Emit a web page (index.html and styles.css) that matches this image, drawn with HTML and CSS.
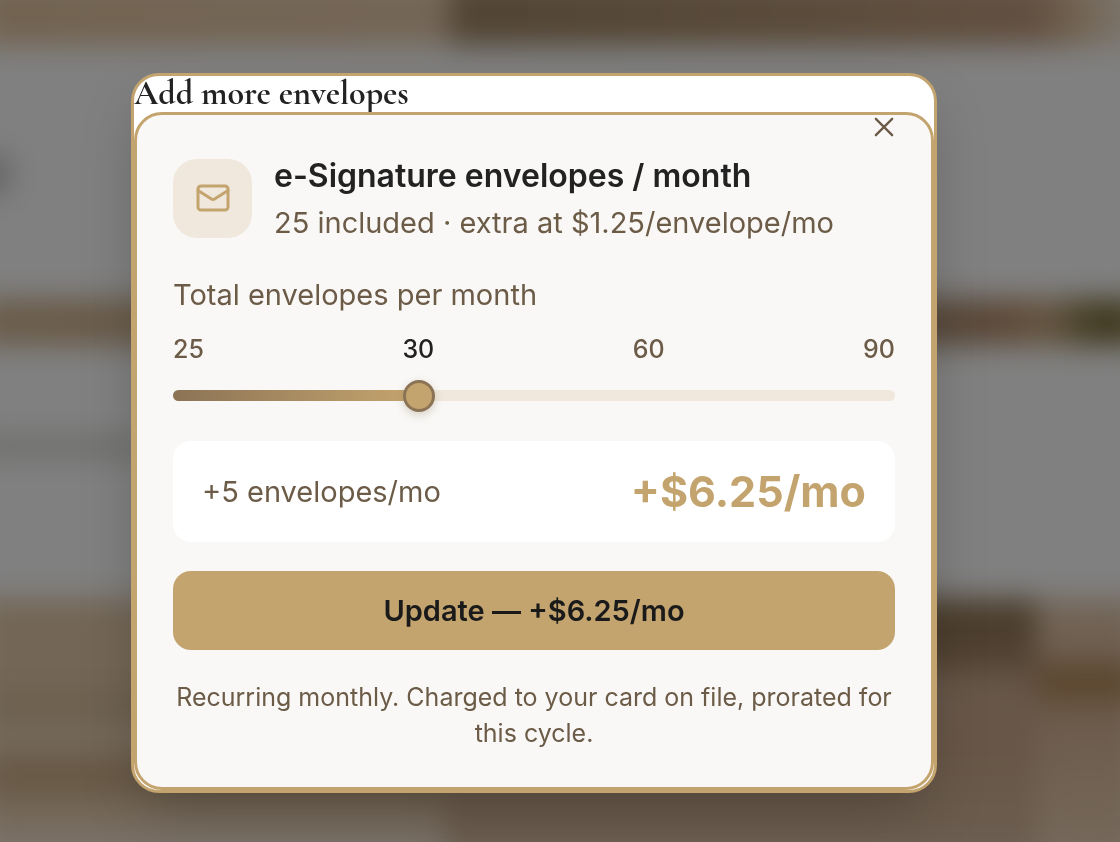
FILE: index.html
```
<!DOCTYPE html>
<html lang="en">
<head>
    <meta charset="UTF-8">
    <meta name="viewport" content="width=device-width, initial-scale=1.0">
    <title>Add more envelopes</title>
    <link rel="stylesheet" href="styles.css">
</head>
<body>
    <!-- Blurred page behind the dialog -->
    <div class="backdrop" aria-hidden="true">
        <div class="band-top"></div>
        <div class="gap-top"></div>
        <div class="band-middle"></div>
        <div class="gap-bottom"></div>
        <div class="band-bottom">
            <div class="photo-left"></div>
            <div class="photo-center"></div>
            <div class="photo-right"></div>
        </div>
    </div>

    <main class="overlay">
        <section class="dialog" role="dialog" aria-labelledby="dialog-title">
            <h1 id="dialog-title">Add more envelopes</h1>
            <form class="card">
                <button type="button" class="close" aria-label="Close">
                    <svg viewBox="0 0 24 24" width="28" height="28"><path d="M5 5l14 14M19 5L5 19"/></svg>
                </button>

                <div class="item">
                    <div class="item-icon">
                        <svg viewBox="0 0 24 24" width="36" height="36">
                            <rect x="2" y="4" width="20" height="16" rx="2"/>
                            <path d="M2 7l8.97 5.7a1.94 1.94 0 0 0 2.06 0L22 7"/>
                        </svg>
                    </div>
                    <div>
                        <h2>e-Signature envelopes / month</h2>
                        <p>25 included · extra at $1.25/envelope/mo</p>
                    </div>
                </div>

                <label class="slider-label" for="envelopes">Total envelopes per month</label>
                <div class="stops">
                    <span>25</span>
                    <span class="active">30</span>
                    <span>60</span>
                    <span>90</span>
                </div>
                <input type="range" class="slider" id="envelopes" min="0" max="3" step="1" value="1">

                <div class="summary">
                    <span>+5 envelopes/mo</span>
                    <strong>+$6.25/mo</strong>
                </div>

                <button type="button" class="update">Update — +$6.25/mo</button>
                <p class="note">Recurring monthly. Charged to your card on file, prorated for this cycle.</p>
            </form>
        </section>
    </main>
</body>
</html>
```
FILE: styles.css
```
* {
    box-sizing: border-box;
}
body {
    margin: 0;
    font-family: Inter, "Liberation Sans", sans-serif;
    color: #222;
    background-color: #808080;
}
h1, h2, p {
    margin: 0;
}

/* Page behind the dialog */
.backdrop {
    position: fixed;
    inset: -20px;
    display: grid;
    grid-template-rows: 66px 252px 48px 252px 1fr;
    background-color: #808080;
    filter: blur(14px);
}
.band-top {
    background: linear-gradient(90deg, #726350 0%, #746657 40%, #514434 41%, #5a4b3a 70%, #625041 91%, #70604d 94%, #7a7268 98%);
}
.gap-top {
    background: radial-gradient(circle at 8px 128px, #505050, transparent 32px);
}
.band-middle {
    background: linear-gradient(90deg, #6a5c4b 0%, #675845 50%, #58483a 85%, #5f4b39 89%, #665642 92%, #423b22 96%);
}
.gap-bottom {
    background: linear-gradient(180deg, transparent 34%, #6c6c69 38%, #6c6c69 42%, transparent 46%) no-repeat 0 0 / 160px 100%;
}
.band-bottom {
    display: grid;
    grid-template-columns: 40% 51% 1fr;
}
.photo-left {
    background: linear-gradient(180deg, #736656 0%, #736656 30%, #6b5e4c 42%, #776c5f 54%, #65543f 66%, #75695b 82%, #7c746c 100%);
}
.photo-center {
    background: linear-gradient(180deg, #4a3d2c 0%, #4f4030 22%, #67574a 32%, #685747 60%, #6b5e51 100%);
}
.photo-right {
    background: linear-gradient(180deg, #74675a 0%, #6d5d4e 22%, #5a452c 28%, #5c472f 34%, #6c5b4b 44%, #76695b 100%);
}

/* Dialog */
.overlay {
    position: relative;
    min-height: 100vh;
    display: flex;
    justify-content: center;
    align-items: flex-start;
    padding: 73px 68px 48px 16px;
}
.dialog {
    width: 100%;
    max-width: 806px;
    border: 3px solid #c4a46e;
    border-radius: 28px;
    background-color: white;
    box-shadow: 0 24px 60px -12px rgba(0, 0, 0, 0.25);
}
h1 {
    font-family: "Cormorant Garamond", "Liberation Serif", serif;
    font-size: 34px;
    line-height: 36px;
    font-weight: 700;
}
.card {
    position: relative;
    display: flex;
    flex-direction: column;
    border: 3px solid #c4a46e;
    border-radius: 28px;
    padding: 36px;
    background-color: #f9f8f6;
    color: #6b5b47;
}
.close {
    position: absolute;
    top: -2px;
    right: 33px;
    padding: 0;
    border: 0;
    background: none;
    line-height: 0;
    cursor: pointer;
}
svg {
    fill: none;
    stroke-width: 2;
    stroke-linecap: round;
    stroke-linejoin: round;
}
.close svg {
    stroke: #6b5b47;
}

.item {
    display: flex;
    align-items: center;
    gap: 22px;
}
.item-icon {
    flex: none;
    display: grid;
    place-items: center;
    width: 79px;
    height: 79px;
    border-radius: 24px;
    background-color: #f0e8dc;
}
.item-icon svg {
    stroke: #c4a46e;
}
.item h2 {
    font-size: 32px;
    line-height: 50px;
    font-weight: 600;
    color: #222;
}
.item p {
    font-size: 29px;
    line-height: 44px;
}

.slider-label {
    margin-top: 28px;
    font-size: 29px;
    line-height: 44px;
}
.stops {
    display: flex;
    justify-content: space-between;
    margin-top: 14px;
    font-size: 25px;
    line-height: 36px;
    font-weight: 500;
}
.stops .active {
    color: #222;
}
.slider {
    appearance: none;
    width: 100%;
    height: 11px;
    margin: 23px 0 0;
    border-radius: 6px;
    background: linear-gradient(90deg, #8b7355, #c4a46e 33%, #f0e8dc 33%);
}
.slider::-webkit-slider-thumb {
    appearance: none;
    width: 32px;
    height: 32px;
    border: 3px solid #8b7355;
    border-radius: 50%;
    background-color: #c4a46e;
    box-shadow: 0 3px 8px rgba(139, 115, 85, 0.3);
}

.summary {
    display: flex;
    justify-content: space-between;
    align-items: center;
    margin-top: 40px;
    padding: 22px 29px;
    border-radius: 18px;
    background-color: white;
    font-size: 29px;
}
.summary strong {
    font-size: 43px;
    line-height: 57px;
    font-weight: 700;
    color: #c4a46e;
}
.update {
    height: 79px;
    margin-top: 29px;
    border: 0;
    border-radius: 18px;
    background-color: #c4a46e;
    font-family: inherit;
    font-size: 29px;
    font-weight: 600;
    color: #1a1a1a;
    cursor: pointer;
}
.note {
    margin-top: 29px;
    font-size: 25px;
    line-height: 36px;
    text-align: center;
}
```
